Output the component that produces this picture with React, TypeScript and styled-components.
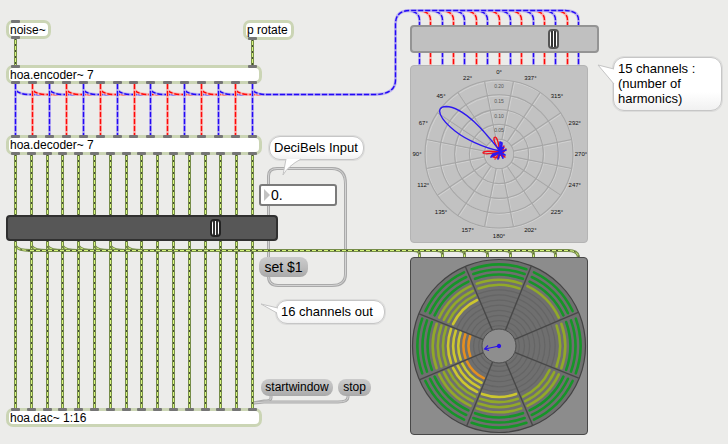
import React from "react";
import styled, { createGlobalStyle, css } from "styled-components";

const GlobalStyle = createGlobalStyle`
  *, *::before, *::after { box-sizing: border-box; }
  body {
    margin: 0;
    background: #ececea;
    color: #000;
    font-family: "Liberation Sans", Arial, sans-serif;
  }
`;

type Spot = { $x: number; $y: number };
type Box = Spot & { $w: number; $h?: number };

const Patcher = styled.main`
  position: relative;
  min-height: 100vh;
  overflow: hidden;
`;

const CordLayer = styled.svg`
  position: absolute;
  inset: 0;
  width: 100%;
  height: 100%;
  fill: none;
`;

const placed = css<Box>`
  position: absolute;
  left: ${(p) => p.$x}px;
  top: ${(p) => p.$y}px;
  width: ${(p) => p.$w}px;
`;

const ObjectBox = styled.div<Box>`
  ${placed}
  height: ${(p) => p.$h ?? 19}px;
  border: 3px solid #cbd5b5;
  border-radius: 7px;
  background: #fff;
  padding-left: 1px;
  font-size: 12px;
  line-height: 14px;
  white-space: nowrap;
`;

const PortStrip = styled.span<{ $side: "top" | "bottom" }>`
  position: absolute;
  left: 2px;
  right: 2px;
  ${(p) => p.$side}: -3px;
  display: flex;
  justify-content: space-between;
`;

const Port = styled.i`
  width: 9px;
  height: 3px;
  border-radius: 1px;
  background: #757575;
`;

const Message = styled.button<Box & { $large?: boolean }>`
  ${placed}
  height: ${(p) => (p.$large ? 20 : 17)}px;
  padding: 0 0 1px;
  border: 0;
  border-radius: 8px;
  background: linear-gradient(#cbcbcb, #bdbdbd 50%, #a9a9a9);
  color: #000;
  font-family: inherit;
  font-size: ${(p) => (p.$large ? 14 : 12)}px;
  line-height: 16px;
  white-space: nowrap;
`;

const Comment = styled.p<Box>`
  ${placed}
  margin: 0;
  padding: 3px 4px 4px;
  border: 1px solid #c6c6c6;
  border-radius: 11px;
  background: linear-gradient(#fff 65%, #f1f1f1);
  box-shadow: 0 0 0 1px #dcdcdb;
  font-size: 13px;
  line-height: 15px;
  white-space: nowrap;
`;

const Tail = styled.svg<Box>`
  ${placed}
  height: ${(p) => p.$h}px;
  overflow: visible;
  fill: #fff;
  stroke: #c4c4c4;
`;

const NumberBox = styled.label<Box>`
  ${placed}
  height: 22px;
  display: flex;
  align-items: center;
  gap: 1px;
  padding-left: 2px;
  border: 2px solid #7b7b7b;
  border-radius: 3px;
  background: #fff;
`;

const NumberField = styled.input`
  flex: 1;
  min-width: 0;
  padding: 0;
  border: 0;
  outline: 0;
  background: transparent;
  color: #000;
  font: 14px/18px "Liberation Sans", Arial, sans-serif;
`;

const Gain = styled.input<Box & { $dark?: boolean }>`
  ${placed}
  height: ${(p) => p.$h}px;
  margin: 0;
  padding: 0 2px;
  appearance: none;
  border: 2px solid ${(p) => (p.$dark ? "#303030" : "#949494")};
  border-radius: 4px;
  background: linear-gradient(
      transparent 48%,
      ${(p) => (p.$dark ? "#747474" : "#aaa")} 48%,
      ${(p) => (p.$dark ? "#747474" : "#aaa")} 52%,
      transparent 52%
    ),
    ${(p) => (p.$dark ? "#575757" : "#c0c0c0")};

  &::-webkit-slider-thumb {
    appearance: none;
    width: 11px;
    height: ${(p) => (p.$dark ? 18 : 20)}px;
    border: 2px solid ${(p) => (p.$dark ? "#222" : "#555")};
    border-radius: 4px;
    background: linear-gradient(
      90deg,
      #fff 1px,
      #333 1px, #333 3px,
      #fff 3px, #fff 4px,
      #333 4px, #333 6px,
      #fff 6px
    );
  }
`;

const Panel = styled.figure<Box & { $dark?: boolean }>`
  ${placed}
  height: ${(p) => p.$h}px;
  margin: 0;
  border: 1px solid ${(p) => (p.$dark ? "#484848" : "#b4b4b4")};
  border-radius: 4px;
  background: ${(p) => (p.$dark ? "#8c8c8c" : "#c2c2c2")};
`;

const Chart = styled.svg`
  display: block;
  width: 100%;
  height: 100%;
  fill: none;
`;

const range = (n: number) => Array.from({ length: n }, (_, i) => i);
/* Evenly spaced port centres, snapped to the middle of a pixel so cords stay crisp. */
const spread = (from: number, to: number, n: number) =>
  range(n).map((i) => Math.floor(from + ((to - from) * i) / (n - 1)) + 0.5);

const polar = (r: number, deg: number) => {
  const a = (deg * Math.PI) / 180;
  return `${(r * Math.sin(a)).toFixed(2)},${(-r * Math.cos(a)).toFixed(2)}`;
};

type Tone = "signal" | "blue" | "red";
const tones: Record<Tone, { edge: string; base: string; dash: string; pattern: string }> = {
  signal: { edge: "#768d49", base: "#d6f57d", dash: "#454d35", pattern: "2 4" },
  blue: { edge: "#beb6f0", base: "#a399f2", dash: "#2308f5", pattern: "5 2" },
  red: { edge: "#f7b9b6", base: "#ff9c9a", dash: "#ff0808", pattern: "5 2" },
};

const Cord = ({ d, tone }: { d: string; tone: Tone }) => {
  const t = tones[tone];
  return (
    <g>
      <path d={d} stroke={t.edge} strokeWidth={3} />
      <path d={d} stroke={t.base} strokeWidth={1} />
      <path
        d={d}
        stroke={t.dash}
        strokeWidth={tone === "signal" ? 1 : 1.4}
        strokeDasharray={t.pattern}
      />
    </g>
  );
};

const MessageCord = ({ d }: { d: string }) => (
  <g>
    <path d={d} stroke="#aaa" strokeWidth={3} />
    <path d={d} stroke="#d4d4d4" strokeWidth={1} />
  </g>
);

const harmonicX = spread(15.5, 252.5, 15);
const channelX = spread(15.5, 252.5, 16);
const scopeX = spread(419.5, 578.5, 15);
const meterX = spread(419.5, 578.5, 8);
const toneOf = (i: number): Tone => (i % 2 ? "red" : "blue");
const redThenBlue = [...range(15).filter((i) => i % 2), ...range(15).filter((i) => i % 2 === 0)];

const Cords = () => (
  <CordLayer aria-hidden="true">
    <MessageCord d="M268.5 186V176Q268.5 168.5 277 168.5H332Q345.5 168.5 345.5 184V274Q345.5 285.5 332 285.5H278Q268.5 285.5 268.5 276" />
    <MessageCord d="M268.5 204V260" />
    <MessageCord d="M271 394V398Q271 401 264 401L253 403" />
    <MessageCord d="M348 394V397Q348 402 338 402H264L253 403" />

    <Cord tone="signal" d="M15.5 38V67" />
    <Cord tone="signal" d="M252.5 39V67" />

    {harmonicX.map((x, i) => (
      <Cord key={i} tone={toneOf(i)} d={`M${x} 84V90Q${x + 4} 94.5 ${x + 14} 94.5H266`} />
    ))}
    {harmonicX.map((x, i) => (
      <Cord key={i} tone={toneOf(i)} d={`M${x} 84V136`} />
    ))}
    {redThenBlue.map((i) => (
      <Cord
        key={i}
        tone={toneOf(i)}
        d={`M${scopeX[i] - 14} 10.5Q${scopeX[i]} 10.5 ${scopeX[i]} 20V26M${scopeX[i]} 52V66`}
      />
    ))}
    <Cord
      tone="blue"
      d="M266 94.5H374Q395.5 94.5 395.5 80V24Q395.5 10.5 410 10.5H566"
    />

    {channelX.map((x, i) => (
      <Cord key={i} tone="signal" d={`M${x} 154V216M${x} 240V409`} />
    ))}
    {channelX.slice(0, 8).map((x, i) => (
      <Cord key={i} tone="signal" d={`M${x} 246Q${x + 3} 250.5 ${x + 15} 250.5`} />
    ))}
    {meterX.slice(0, 7).map((x, i) => (
      <Cord key={i} tone="signal" d={`M${x - 6} 250.5Q${x} 250.5 ${x} 254V258`} />
    ))}
    <Cord tone="signal" d="M28 250.5H568Q578.5 250.5 578.5 258" />
  </CordLayer>
);

const MaxObject = ({
  text, x, y, w, h, inlets = 0, outlets = 0,
}: { text: string; x: number; y: number; w: number; h?: number; inlets?: number; outlets?: number }) => (
  <ObjectBox $x={x} $y={y} $w={w} $h={h}>
    {inlets > 0 && <PortStrip $side="top">{range(inlets).map((i) => <Port key={i} />)}</PortStrip>}
    {text}
    {outlets > 0 && <PortStrip $side="bottom">{range(outlets).map((i) => <Port key={i} />)}</PortStrip>}
  </ObjectBox>
);

const angleLabels = [0, 22, 45, 67, 90, 112, 135, 157, 180, 202, 225, 247, 270, 292, 315, 337];

const HarmonicScope = () => {
  const grid = (
    <>
      {range(5).map((i) => <circle key={i} r={14.8 * (i + 1)} />)}
      {range(16).map((i) => {
        const a = 11.25 + i * 22.5;
        return <path key={i} d={`M${polar(14.8, a)}L${polar(74, a)}`} />;
      })}
    </>
  );
  return (
    <Chart viewBox="-88 -88 176 176" role="img" aria-label="Harmonics scope">
      <g stroke="#d2d2d2" strokeWidth={1} transform="translate(1 1)">{grid}</g>
      <g stroke="#a6a6a6" strokeWidth={1.1}>{grid}</g>
      <g fill="#111" fontSize={6} textAnchor="middle">
        {angleLabels.map((deg, i) => {
          const [x, y] = polar(82, -i * 22.5).split(",").map(Number);
          return <text key={deg} x={x} y={y + 2}>{deg}°</text>;
        })}
      </g>
      <g fill="#555" fontSize={5} textAnchor="middle">
        <text y={-66}>0.20</text>
        <text y={-51}>0.15</text>
        <text y={-36}>0.10</text>
        <text y={-22}>0.05</text>
      </g>
      <g strokeLinejoin="round">
        <path
          stroke="#ee1520"
          strokeWidth={1.4}
          d="M1-2Q-6-13-5-16Q-3-19-1-12ZM1-2Q-15 1-16-1Q-16-4 1-2ZM1-2L5-8L3-1L7-5L3 0L6 3L0 0L-4 5L0 0L0 4L-6 3Z"
        />
        <path
          stroke="#2d18f0"
          strokeWidth={1.7}
          d="M1-2L1-12L3-11L2-2L7-4L1-2L6 1L1-2L4 4L1-2L-1 5L1-2L-8 3L-6 0ZM-1-7L3 2M5-7L-3 1"
        />
        <path
          stroke="#2d18f0"
          strokeWidth={1.3}
          d="M1-3C-14-22-35-47-53-47.5C-65-47-59-35-44-23C-34-15-15-6 1-3"
        />
      </g>
    </Chart>
  );
};

/* Lit segments for each loudspeaker, clockwise from the top. */
const levels = [5, 4, 5, 6, 7, 10, 11, 7];

const segmentColor = (index: number, level: number) => {
  if (index >= level) return "#656565";
  if (index < 3) return "#169528";
  if (index < 6) return "#91a929";
  if (index < 9) return "#cdc72f";
  return "#e48f20";
};

const LoudspeakerMeter = () => (
  <Chart viewBox="-88 -88 176 176" role="img" aria-label="Loudspeaker meter">
    <circle r={86.5} fill="#6f6f6f" stroke="#444" strokeWidth={1.2} />
    {levels.map((level, s) =>
      range(13).map((i) => {
        const r = 81.5 - i * 5.1;
        const lit = i < level;
        const half = lit ? 19.6 : 21.6;
        return (
          <path
            key={`${s}-${i}`}
            d={`M${polar(r, s * 45 - half)}A${r} ${r} 0 0 1 ${polar(r, s * 45 + half)}`}
            stroke={segmentColor(i, level)}
            strokeWidth={lit ? 2.6 : 1.2}
            strokeLinecap="round"
          />
        );
      })
    )}
    {range(8).map((i) => (
      <path
        key={i}
        d={`M${polar(17, i * 45 + 22)}L${polar(86, i * 45 + 22)}`}
        stroke="#484848"
        strokeWidth={1.4}
      />
    ))}
    <circle r={17} fill="#8e8e8e" stroke="#4c4c4c" />
    <g stroke="#2b12e8" strokeWidth={1.1}>
      <circle r={1.6} fill="#2b12e8" />
      <path d="M0 0L-14 3M-11-0.5L-14.5 3L-10 4.5" />
    </g>
  </Chart>
);

export default function App() {
  return (
    <>
      <GlobalStyle />
      <Patcher>
        <Cords />

        <MaxObject text="noise~" x={6} y={20} w={45} inlets={1} outlets={1} />
        <MaxObject text="p rotate" x={243} y={20} w={51} h={20} outlets={1} />
        <MaxObject text="hoa.encoder~ 7" x={6} y={65} w={256} inlets={2} outlets={15} />
        <MaxObject text="hoa.decoder~ 7" x={6} y={135} w={256} h={20} inlets={15} outlets={16} />
        <MaxObject text="hoa.dac~ 1:16" x={6} y={408} w={256} inlets={16} />

        <Gain
          type="range" aria-label="Output gain" min={0} max={100} defaultValue={79}
          $dark $x={6} $y={215} $w={272} $h={26}
        />
        <Gain
          type="range" aria-label="Harmonics gain" min={0} max={100} defaultValue={79}
          $x={410} $y={25} $w={189} $h={28}
        />

        <NumberBox $x={259} $y={184} $w={78}>
          <svg width="7" height="12" viewBox="0 0 7 12" aria-hidden="true">
            <path d="M1 0L7 6L1 12Z" fill="#c2c2c2" />
          </svg>
          <NumberField aria-label="Decibels" defaultValue="0." />
        </NumberBox>

        <Message type="button" $large $x={259} $y={257} $w={49}>set $1</Message>
        <Message type="button" $x={261} $y={379} $w={72}>startwindow</Message>
        <Message type="button" $x={338} $y={379} $w={33}>stop</Message>

        <Comment $x={269} $y={136} $w={95}>DeciBels Input</Comment>
        <Tail $x={282} $y={158} $w={22} $h={17} aria-hidden="true">
          <path d="M4 1L1 17Q6 8 19 1" />
        </Tail>

        <Comment $x={276} $y={300} $w={109}>16 channels out</Comment>
        <Tail $x={261} $y={303} $w={18} $h={12} aria-hidden="true">
          <path d="M17 5L0 1L16 10" />
        </Tail>

        <Comment $x={613} $y={57} $w={109}>
          15 channels :<br />(number of<br />harmonics)
        </Comment>
        <Tail $x={598} $y={65} $w={18} $h={20} aria-hidden="true">
          <path d="M16 4L0 0L16 19" />
        </Tail>

        <Panel $x={410} $y={65} $w={178} $h={178}>
          <HarmonicScope />
        </Panel>
        <Panel $dark $x={410} $y={257} $w={178} $h={178}>
          <LoudspeakerMeter />
        </Panel>
      </Patcher>
    </>
  );
}
